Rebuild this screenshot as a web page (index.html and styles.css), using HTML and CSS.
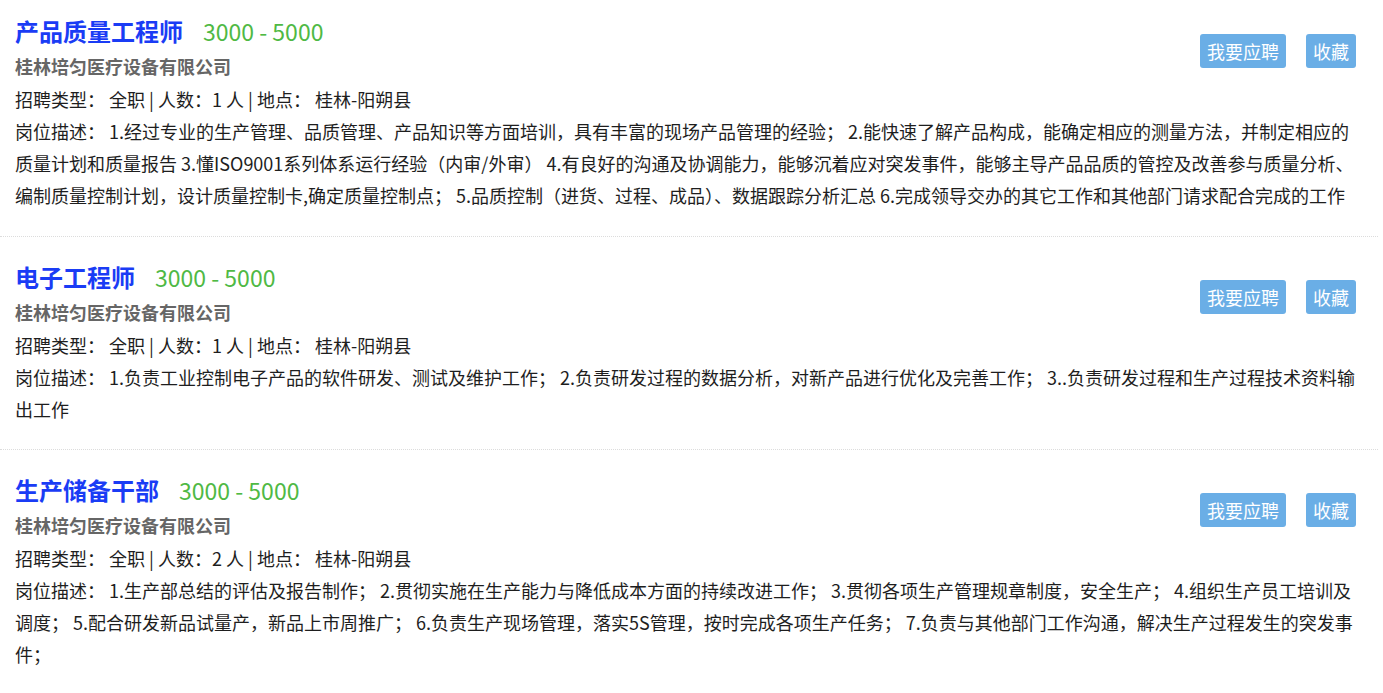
FILE: index.html
```html
<!DOCTYPE html>
<html lang="zh-CN">
<head>
  <meta charset="UTF-8" />
  <meta name="viewport" content="width=device-width, initial-scale=1.0"/>
  <title>招聘信息</title>
  <link rel="stylesheet" href="styles.css">
</head>
<body>
  <div class="job-list">

    <div class="job-item">
      <div class="job-head">
        <div class="job-info">
          <h2 class="job-title">产品质量工程师<span class="salary">3000 - 5000</span></h2>
          <div class="company">桂林培匀医疗设备有限公司</div>
          <div class="job-meta">招聘类型： 全职 | 人数：1 人 | 地点： 桂林-阳朔县</div>
        </div>
        <div class="job-actions">
          <button class="btn">我要应聘</button>
          <button class="btn">收藏</button>
        </div>
      </div>
      <p class="job-desc">岗位描述： 1.经过专业的生产管理、品质管理、产品知识等方面培训，具有丰富的现场产品管理的经验； 2.能快速了解产品构成，能确定相应的测量方法，并制定相应的质量计划和质量报告 3.懂ISO9001系列体系运行经验（内审/外审） 4.有良好的沟通及协调能力，能够沉着应对突发事件，能够主导产品品质的管控及改善参与质量分析、编制质量控制计划，设计质量控制卡,确定质量控制点； 5.品质控制（进货、过程、成品）、数据跟踪分析汇总 6.完成领导交办的其它工作和其他部门请求配合完成的工作</p>
    </div>

    <div class="job-item">
      <div class="job-head">
        <div class="job-info">
          <h2 class="job-title">电子工程师<span class="salary">3000 - 5000</span></h2>
          <div class="company">桂林培匀医疗设备有限公司</div>
          <div class="job-meta">招聘类型： 全职 | 人数：1 人 | 地点： 桂林-阳朔县</div>
        </div>
        <div class="job-actions">
          <button class="btn">我要应聘</button>
          <button class="btn">收藏</button>
        </div>
      </div>
      <p class="job-desc">岗位描述： 1.负责工业控制电子产品的软件研发、测试及维护工作； 2.负责研发过程的数据分析，对新产品进行优化及完善工作； 3..负责研发过程和生产过程技术资料输出工作</p>
    </div>

    <div class="job-item">
      <div class="job-head">
        <div class="job-info">
          <h2 class="job-title">生产储备干部<span class="salary">3000 - 5000</span></h2>
          <div class="company">桂林培匀医疗设备有限公司</div>
          <div class="job-meta">招聘类型： 全职 | 人数：2 人 | 地点： 桂林-阳朔县</div>
        </div>
        <div class="job-actions">
          <button class="btn">我要应聘</button>
          <button class="btn">收藏</button>
        </div>
      </div>
      <p class="job-desc">岗位描述： 1.生产部总结的评估及报告制作； 2.贯彻实施在生产能力与降低成本方面的持续改进工作； 3.贯彻各项生产管理规章制度，安全生产； 4.组织生产员工培训及调度； 5.配合研发新品试量产，新品上市周推广； 6.负责生产现场管理，落实5S管理，按时完成各项生产任务； 7.负责与其他部门工作沟通，解决生产过程发生的突发事件；</p>
    </div>

  </div>
</body>
</html>
```

FILE: styles.css
```css
* {
  box-sizing: border-box;
  margin: 0;
  padding: 0;
}

body {
  font-family: "Noto Sans CJK SC", "Noto Sans", sans-serif;
  background-color: #ffffff;
  color: #1e1e1e;
  font-size: 18px;
}

.job-list {
  width: 100%;
}

.job-item {
  padding: 22px 14px 24px 15px;
  margin-right: 5px;
  border-bottom: 1px dotted #dcdcdc;
}

.job-item:first-child {
  padding-top: 13px;
  padding-bottom: 25px;
}

.job-item:last-child {
  border-bottom: none;
}

.job-head {
  display: flex;
  justify-content: space-between;
  align-items: flex-start;
}

.job-title {
  font-size: 24px;
  font-weight: bold;
  line-height: 36px;
  color: #1a3cf5;
}

.salary {
  font-size: 23px;
  font-weight: normal;
  color: #4fb944;
  margin-left: 20px;
}

.company {
  font-weight: bold;
  color: #666;
  line-height: 34px;
}

.job-meta {
  line-height: 32px;
}

.job-actions {
  display: flex;
  gap: 20px;
  margin-top: 21px;
  margin-right: 8px;
}

.btn {
  font-family: inherit;
  font-size: 18px;
  line-height: 34px;
  height: 34px;
  padding: 0 7px;
  background-color: #6aaee6;
  color: #fff;
  border: none;
  border-radius: 3px;
  cursor: pointer;
}

.btn:hover {
  background-color: #5a9fd8;
}

.job-desc {
  line-height: 32px;
}
```
